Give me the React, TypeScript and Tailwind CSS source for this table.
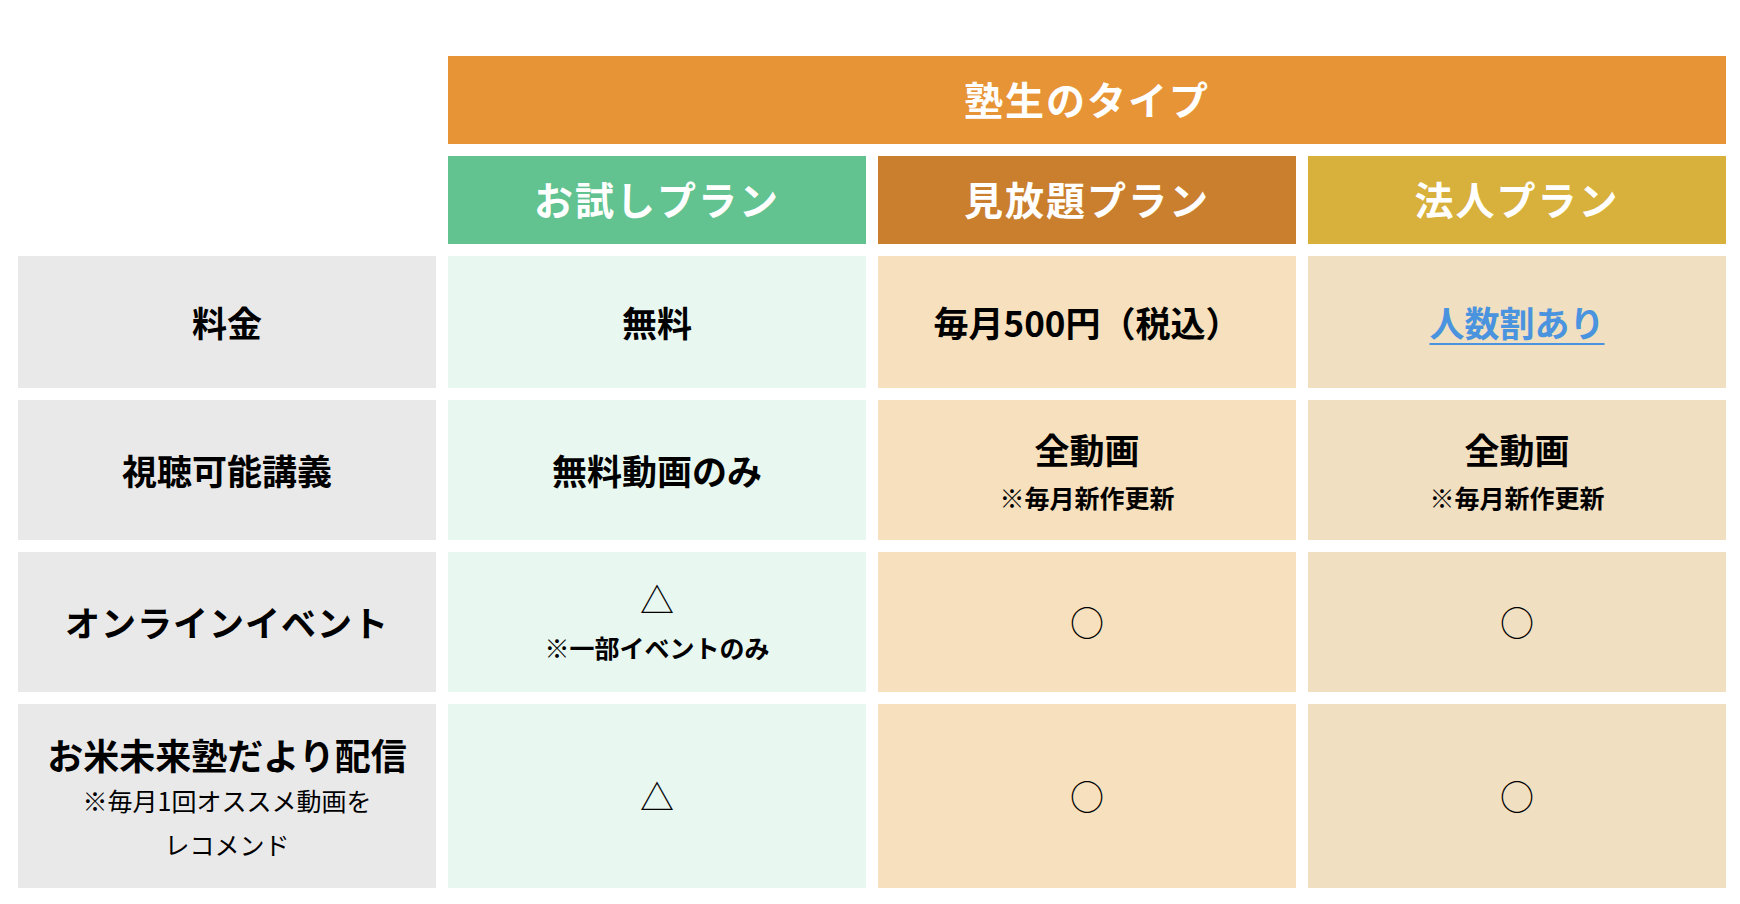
const rows = [
  { label: "料金", h: "h-[132px]" },
  { label: "視聴可能講義", h: "h-[140px]" },
  { label: "オンラインイベント", h: "h-[140px]" },
];

function Sub({ children }: { children: React.ReactNode }) {
  return <div className="text-[25px] font-bold leading-[44px] mt-[2px]">{children}</div>;
}

function Mark({ children }: { children: React.ReactNode }) {
  return <div className="text-[34px] font-normal leading-[48px]">{children}</div>;
}

export default function App() {
  const cell = "flex flex-col items-center justify-center text-center text-black";
  return (
    <main
      className="min-h-[904px] w-[1740px] bg-white pt-[56px] pl-[18px]"
      style={{ fontFamily: '"Noto Sans CJK JP", "Noto Sans", sans-serif' }}
    >
      <div className="grid grid-cols-[418px_418px_418px_418px] gap-[12px] text-[35px] font-bold">
        {/* type header */}
        <div />
        <div className="col-span-3 h-[88px] bg-[#E79436] flex items-center justify-center pb-1 text-white text-[39px] tracking-[2px]">
          塾生のタイプ
        </div>

        {/* plan headers */}
        <div />
        <div className="h-[88px] bg-[#62C391] flex items-center justify-center pb-1 text-white text-[39px] tracking-[2px]">
          お試しプラン
        </div>
        <div className="h-[88px] bg-[#CA7F2E] flex items-center justify-center pb-1 text-white text-[39px] tracking-[2px]">
          見放題プラン
        </div>
        <div className="h-[88px] bg-[#D8B03C] flex items-center justify-center pb-1 text-white text-[39px] tracking-[2px]">
          法人プラン
        </div>

        {/* 料金 */}
        <div className={`${cell} ${rows[0].h} bg-[#E9E9E9]`}>{rows[0].label}</div>
        <div className={`${cell} h-[132px] bg-[#E8F7F0]`}>無料</div>
        <div className={`${cell} h-[132px] bg-[#F6E0BD]`}>毎月500円（税込）</div>
        <div className={`${cell} h-[132px] bg-[#F0DFC1]`}>
          <a href="#" className="text-[#4A93DE] underline underline-offset-[6px] decoration-[2px]">
            人数割あり
          </a>
        </div>

        {/* 視聴可能講義 */}
        <div className={`${cell} ${rows[1].h} bg-[#E9E9E9]`}>{rows[1].label}</div>
        <div className={`${cell} h-[140px] bg-[#E8F7F0]`}>無料動画のみ</div>
        <div className={`${cell} h-[140px] bg-[#F6E0BD] pt-1`}>
          <div className="leading-[48px]">全動画</div>
          <Sub>※毎月新作更新</Sub>
        </div>
        <div className={`${cell} h-[140px] bg-[#F0DFC1] pt-1`}>
          <div className="leading-[48px]">全動画</div>
          <Sub>※毎月新作更新</Sub>
        </div>

        {/* オンラインイベント */}
        <div className={`${cell} ${rows[2].h} bg-[#E9E9E9] tracking-[1px]`}>{rows[2].label}</div>
        <div className={`${cell} h-[140px] bg-[#E8F7F0]`}>
          <Mark>△</Mark>
          <Sub>※一部イベントのみ</Sub>
        </div>
        <div className={`${cell} h-[140px] bg-[#F6E0BD]`}>
          <Mark>○</Mark>
        </div>
        <div className={`${cell} h-[140px] bg-[#F0DFC1]`}>
          <Mark>○</Mark>
        </div>

        {/* お米未来塾だより配信 */}
        <div className={`${cell} h-[184px] bg-[#E9E9E9] pt-1`}>
          <div className="text-[36px] leading-[48px]">お米未来塾だより配信</div>
          <div className="text-[25px] font-normal leading-[44px]">
            ※毎月1回オススメ動画を
            <br />
            レコメンド
          </div>
        </div>
        <div className={`${cell} h-[184px] bg-[#E8F7F0]`}>
          <Mark>△</Mark>
        </div>
        <div className={`${cell} h-[184px] bg-[#F6E0BD]`}>
          <Mark>○</Mark>
        </div>
        <div className={`${cell} h-[184px] bg-[#F0DFC1]`}>
          <Mark>○</Mark>
        </div>
      </div>
    </main>
  );
}
